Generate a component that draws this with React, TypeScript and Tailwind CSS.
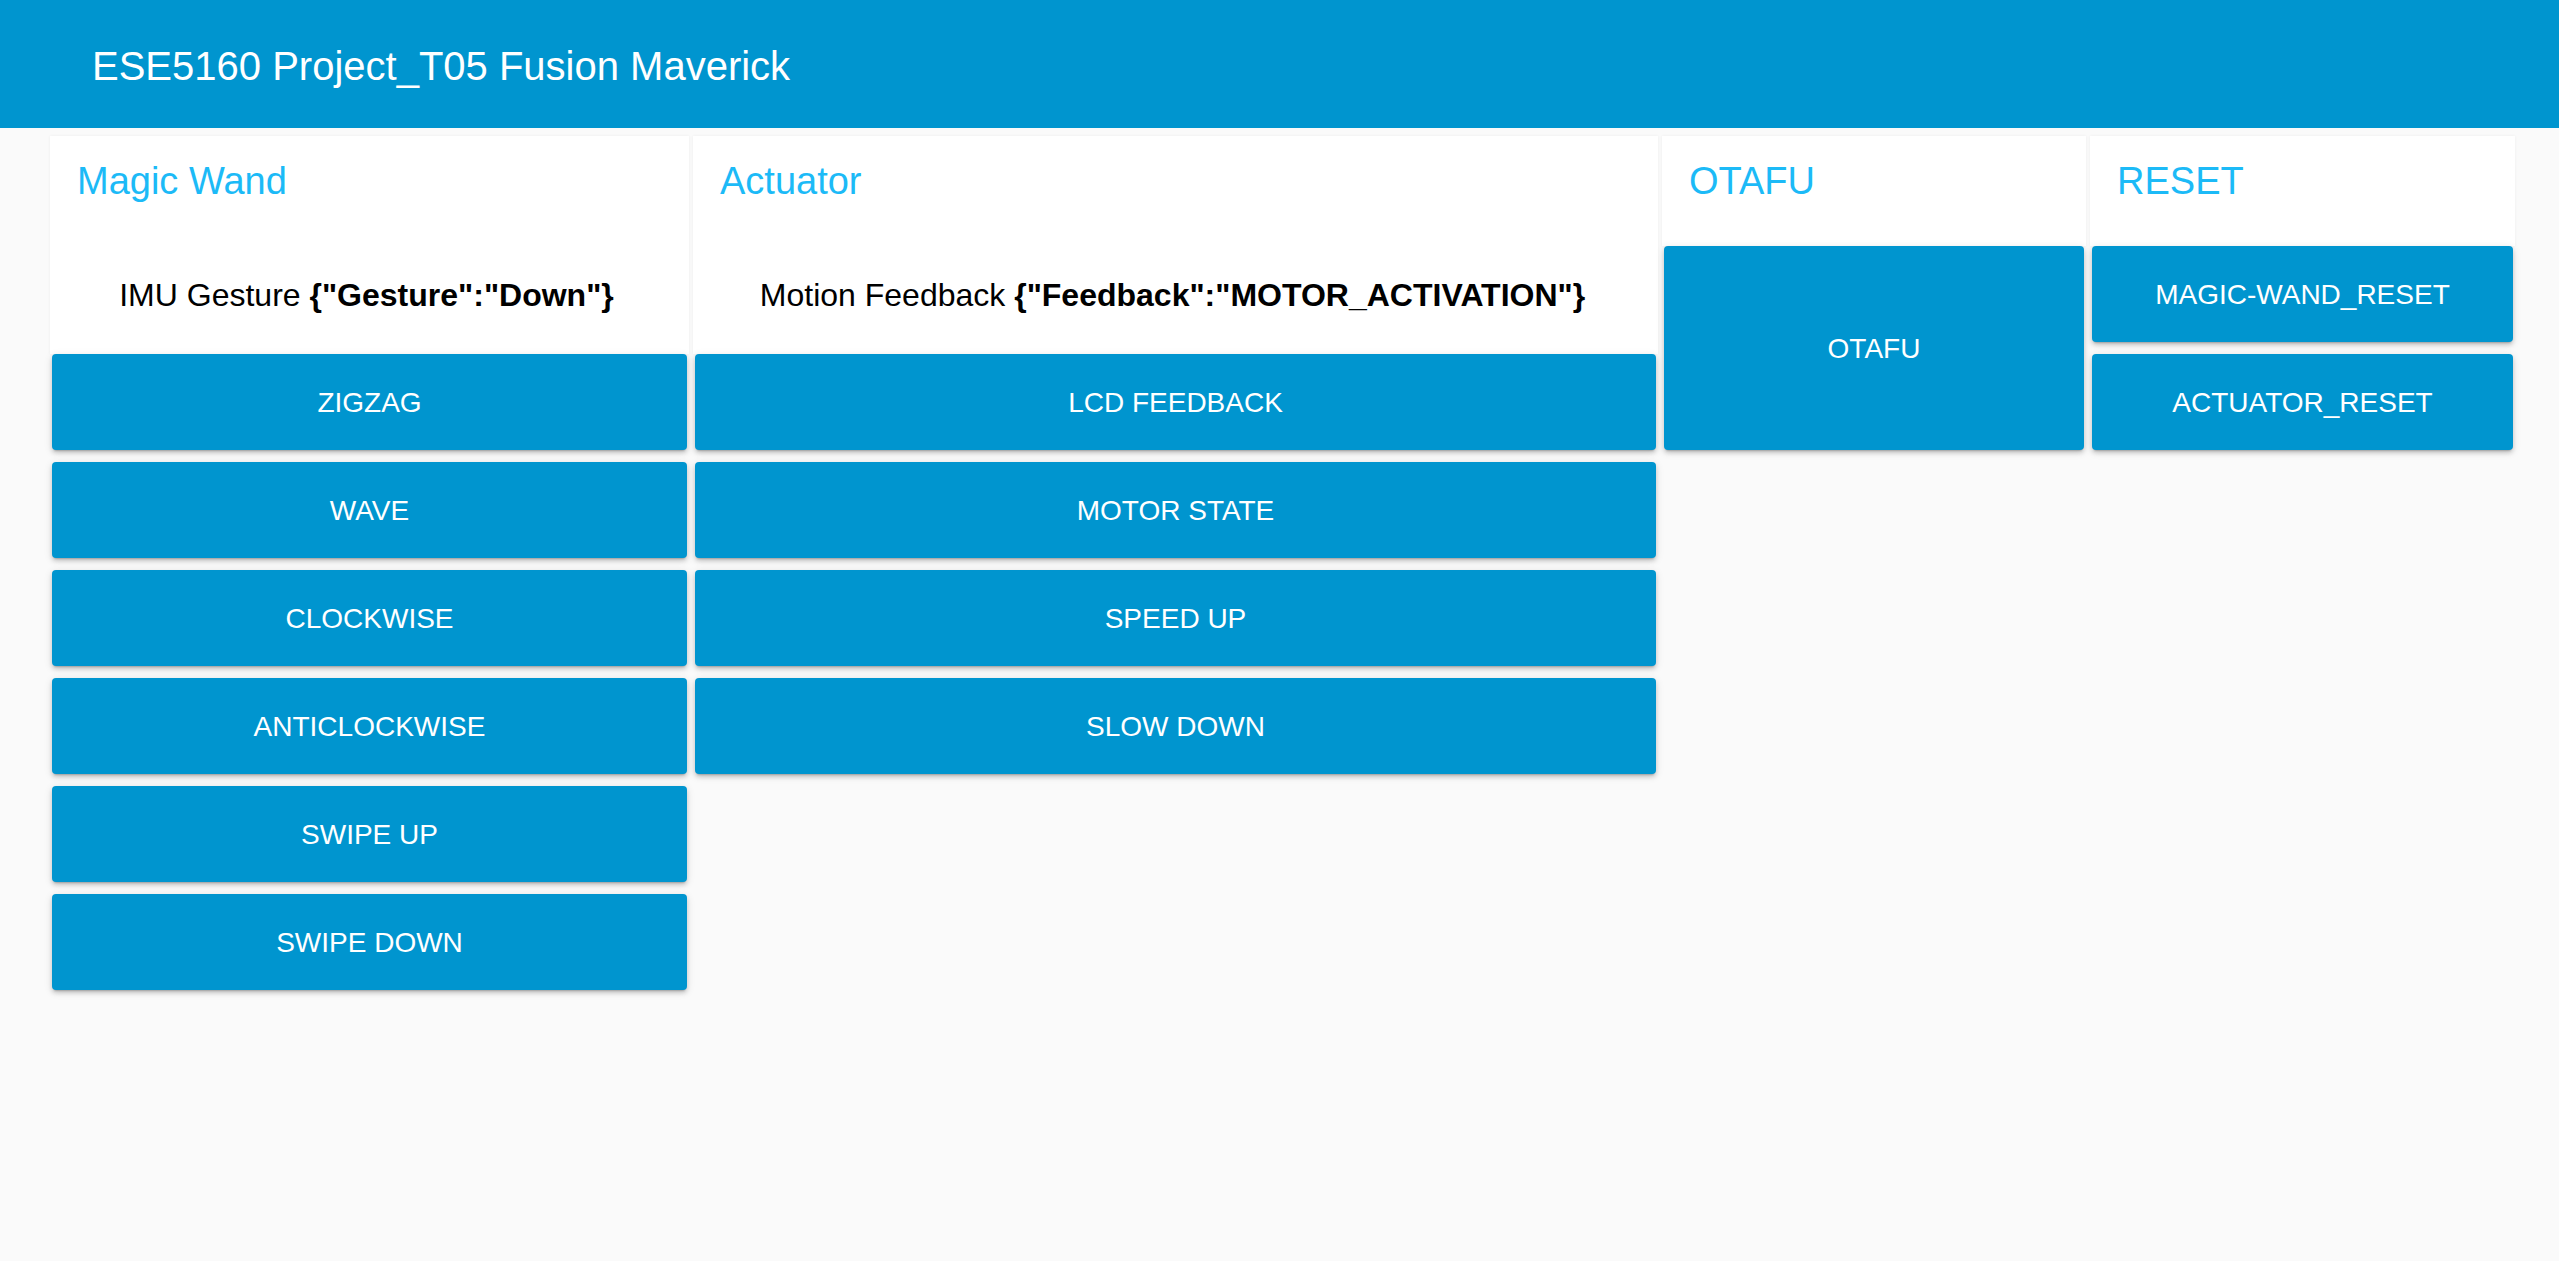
import type { ReactNode } from "react";

const wandButtons = ["ZIGZAG", "WAVE", "CLOCKWISE", "ANTICLOCKWISE", "SWIPE UP", "SWIPE DOWN"];
const actuatorButtons = ["LCD FEEDBACK", "MOTOR STATE", "SPEED UP", "SLOW DOWN"];
const resetButtons = ["MAGIC-WAND_RESET", "ACTUATOR_RESET"];

function ActionButton({ label, tall = false }: { label: string; tall?: boolean }) {
  return (
    <button
      className={`flex w-full items-center justify-center rounded-[4px] bg-[#0095cf] pt-[2px] text-[28px] text-white shadow-[0_3px_2px_-2px_rgba(0,0,0,0.2),0_3px_4px_0_rgba(0,0,0,0.14),0_2px_8px_0_rgba(0,0,0,0.12)] ${
        tall ? "h-[204px]" : "h-[96px]"
      }`}
    >
      {label}
    </button>
  );
}

function Column({
  title,
  width,
  children,
  status,
}: {
  title: string;
  width: string;
  children: ReactNode;
  status?: ReactNode;
}) {
  return (
    <section className={`flex flex-col ${width}`}>
      <div className="bg-white shadow-[0_0_3px_rgba(0,0,0,0.06)]">
        <div className="h-[110px] pl-[27px] pt-[26px]">
          <h2 className="text-[38px] leading-[38px] text-[#1cbaf7]">{title}</h2>
        </div>
        {status && (
          <div className="h-[108px] pr-[6px] pt-[33px] text-center text-[32px] leading-[32px] text-black">{status}</div>
        )}
      </div>
      <div className="flex flex-col gap-[12px] px-[2px]">{children}</div>
    </section>
  );
}

export default function App() {
  return (
    <div className="min-h-screen bg-[#fafafa] font-['Liberation_Sans',Arial,sans-serif]">
      <header className="flex h-[128px] items-center bg-[#0095cf] pl-[92px] pt-[3px]">
        <h1 className="text-[40px] text-white">ESE5160 Project_T05 Fusion Maverick</h1>
      </header>

      <main className="flex items-start gap-[4px] pl-[50px] pt-[8px]">
        <Column
          title="Magic Wand"
          width="w-[639px]"
          status={
            <>
              IMU Gesture <b>{'{"Gesture":"Down"}'}</b>
            </>
          }
        >
          {wandButtons.map((b) => (
            <ActionButton key={b} label={b} />
          ))}
        </Column>

        <Column
          title="Actuator"
          width="w-[965px]"
          status={
            <>
              Motion Feedback <b>{'{"Feedback":"MOTOR_ACTIVATION"}'}</b>
            </>
          }
        >
          {actuatorButtons.map((b) => (
            <ActionButton key={b} label={b} />
          ))}
        </Column>

        <Column title="OTAFU" width="w-[424px]">
          <ActionButton label="OTAFU" tall />
        </Column>

        <Column title="RESET" width="w-[425px]">
          {resetButtons.map((b) => (
            <ActionButton key={b} label={b} />
          ))}
        </Column>
      </main>
    </div>
  );
}
